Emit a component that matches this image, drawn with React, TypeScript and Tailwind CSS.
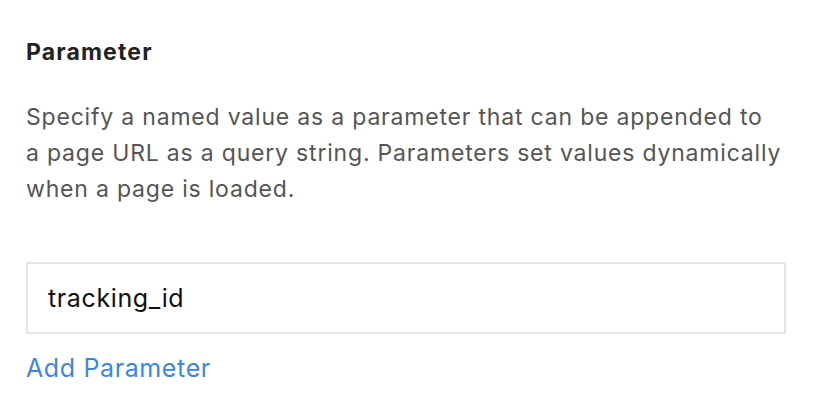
export default function App() {
  return (
    <div className="min-h-[418px] w-[816px] bg-white font-['Inter',sans-serif]">
      <section className="px-[26px] pt-[36px]">
        <h2 className="text-[23px] font-bold leading-[32px] tracking-[0.05em] text-[#222]">
          Parameter
        </h2>
        <p className="mt-[31px] w-[760px] text-[23px] leading-[36px] tracking-[0.035em] text-[#555]">
          Specify a named value as a parameter that can be appended to
          <br />a page URL as a query string. Parameters set values dynamically
          <br />
          when a page is loaded.
        </p>
        <input
          type="text"
          defaultValue="tracking_id"
          className="mt-[55px] block h-[72px] w-[760px] rounded-[2px] border-2 border-[#e3e3e3] px-[20px] text-[25px] tracking-[0.025em] text-[#111] outline-none"
        />
        <a
          href="#"
          className="mt-[18px] inline-block text-[25px] leading-[32px] tracking-[0.025em] text-[#3b87dc]"
        >
          Add Parameter
        </a>
      </section>
    </div>
  );
}
